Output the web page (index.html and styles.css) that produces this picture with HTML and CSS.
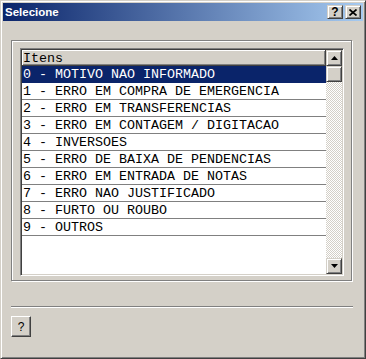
FILE: index.html
```html
<!DOCTYPE html>
<html>
<head>
  <meta charset="utf-8">
  <title>Selecione</title>
  <link rel="stylesheet" href="styles.css">
</head>
<body>
<div class="window">
  <div class="titlebar">
    <span class="title">Selecione</span>
    <div class="cap-btns">
      <div class="cap-btn help">?</div>
      <div class="cap-btn close">
        <svg width="8" height="7" viewBox="0 0 8 7"><path d="M0.5 0.5L7.5 6.5M7.5 0.5L0.5 6.5" stroke="#000" stroke-width="1.7"/></svg>
      </div>
    </div>
  </div>
  <div class="content">
    <div class="group">
      <div class="listbox">
        <div class="list">
          <div class="list-head">Itens</div>
          <div class="row selected">0 - MOTIVO NAO INFORMADO</div>
          <div class="row">1 - ERRO EM COMPRA DE EMERGENCIA</div>
          <div class="row">2 - ERRO EM TRANSFERENCIAS</div>
          <div class="row">3 - ERRO EM CONTAGEM / DIGITACAO</div>
          <div class="row">4 - INVERSOES</div>
          <div class="row">5 - ERRO DE BAIXA DE PENDENCIAS</div>
          <div class="row">6 - ERRO EM ENTRADA DE NOTAS</div>
          <div class="row">7 - ERRO NAO JUSTIFICADO</div>
          <div class="row">8 - FURTO OU ROUBO</div>
          <div class="row">9 - OUTROS</div>
        </div>
        <div class="scrollbar">
          <div class="sb-btn">
            <svg width="7" height="4" viewBox="0 0 7 4"><polygon points="0,4 7,4 3.5,0" fill="#000"/></svg>
          </div>
          <div class="sb-btn"></div>
          <div class="sb-track"></div>
          <div class="sb-btn">
            <svg width="7" height="4" viewBox="0 0 7 4"><polygon points="0,0 7,0 3.5,4" fill="#000"/></svg>
          </div>
        </div>
      </div>
    </div>
    <div class="sep"></div>
    <div class="help-btn">?</div>
  </div>
</div>
</body>
</html>
```

FILE: styles.css
```css
body {
  margin: 0;
  font-family: "Liberation Sans", Arial, sans-serif;
  font-size: 11px;
}
.window {
  width: 366px;
  height: 359px;
  box-sizing: border-box;
  padding: 2px;
  background: #d4d0c8;
  border: 1px solid;
  border-color: #d4d0c8 #404040 #404040 #d4d0c8;
  box-shadow: inset 1px 1px #fff, inset -1px -1px #808080;
}
.titlebar {
  height: 18px;
  display: flex;
  align-items: center;
  background: linear-gradient(to right, #0a246a, #a6caf0);
}
.title {
  padding-left: 2px;
  color: #fff;
  font-weight: bold;
  font-size: 11.5px;
}
.cap-btns {
  margin-left: auto;
  margin-right: 2px;
  display: flex;
  gap: 1px;
}
.cap-btn {
  width: 16px;
  height: 14px;
  box-sizing: border-box;
  display: flex;
  align-items: center;
  justify-content: center;
  background: #d4d0c8;
  border: 1px solid;
  border-color: #d4d0c8 #404040 #404040 #d4d0c8;
  box-shadow: inset 1px 1px #fff, inset -1px -1px #808080;
  font-weight: bold;
  font-size: 12px;
}
.cap-btn.close {
  margin-left: 1px;
}
.content {
  padding: 19px 0 0 8px;
}
.group {
  width: 341px;
  height: 241px;
  box-sizing: border-box;
  padding: 7px 0 0 8px;
  border: 1px solid #808080;
  box-shadow: inset 1px 1px #fff, 1px 1px #fff;
}
.listbox {
  width: 324px;
  height: 228px;
  box-sizing: border-box;
  padding: 1px;
  display: flex;
  background: #fff;
  border: 1px solid;
  border-color: #808080 #fff #fff #808080;
  box-shadow: inset 1px 1px #404040, inset -1px -1px #d4d0c8;
}
.list {
  flex: 1;
  font-family: "Liberation Mono", "Courier New", monospace;
  font-size: 13.33px;
}
.list-head {
  height: 16px;
  line-height: 15px;
  box-sizing: border-box;
  padding: 1px 0 0 1px;
  background: #d4d0c8;
  border-right: 1px solid #404040;
  border-bottom: 1px solid #404040;
  box-shadow: inset 1px 1px #fff, inset -1px -1px #808080;
}
.row {
  height: 17px;
  line-height: 16px;
  box-sizing: border-box;
  padding: 1px 0 0 1px;
  border-bottom: 1px solid #808080;
  white-space: nowrap;
}
.row.selected {
  background: #0a246a;
  color: #fff;
  border-bottom-color: #0a246a;
}
.scrollbar {
  width: 16px;
  display: flex;
  flex-direction: column;
}
.sb-btn {
  height: 16px;
  box-sizing: border-box;
  display: flex;
  align-items: center;
  justify-content: center;
  background: #d4d0c8;
  border: 1px solid;
  border-color: #d4d0c8 #404040 #404040 #d4d0c8;
  box-shadow: inset 1px 1px #fff, inset -1px -1px #808080;
}
.sb-track {
  flex: 1;
  background: repeating-conic-gradient(#fff 0 25%, #d4d0c8 0 50%) 0 0 / 2px 2px;
}
.sep {
  width: 342px;
  margin-top: 25px;
  border-top: 1px solid #808080;
  border-bottom: 1px solid #fff;
}
.help-btn {
  width: 20px;
  height: 21px;
  margin-top: 8px;
  box-sizing: border-box;
  display: flex;
  align-items: center;
  justify-content: center;
  background: #d4d0c8;
  border: 1px solid;
  border-color: #fff #404040 #404040 #fff;
  box-shadow: inset -1px -1px #808080;
  font-size: 12px;
}
```
